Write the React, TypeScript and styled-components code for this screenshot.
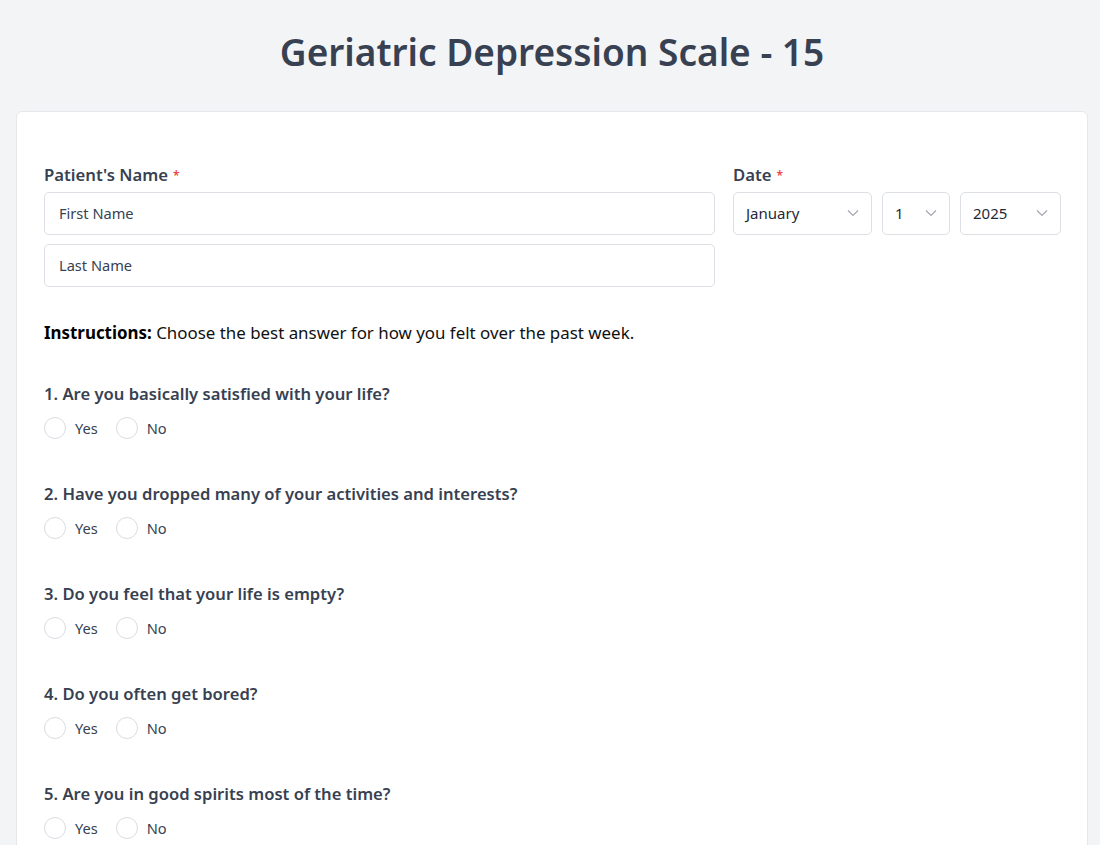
import React from "react";
import styled, { createGlobalStyle } from "styled-components";

const GlobalStyle = createGlobalStyle`
  html, body {
    margin: 0;
    padding: 0;
    background: #f3f4f6;
    font-family: "Noto Sans", "Open Sans", sans-serif;
    color: #374151;
  }
`;

const Page = styled.div`
  width: 1072px;
  padding: 0 16px;
`;

const Title = styled.h1`
  margin: 0;
  padding: 31px 0 38px;
  text-align: center;
  font-size: 37px;
  line-height: 42px;
  font-weight: 600;
  color: #374151;
`;

const Card = styled.div`
  background: #fff;
  border: 1px solid #e5e7eb;
  border-radius: 6px;
  padding: 51px 27px 40px;
  min-height: 800px;
`;

const TopRow = styled.div`
  display: grid;
  grid-template-columns: 671px 328px;
  column-gap: 18px;
`;

const Field = styled.div`
  display: flex;
  flex-direction: column;
  gap: 9px;
`;

const Label = styled.div`
  font-size: 16.7px;
  line-height: 24px;
  font-weight: 600;
  color: #374151;
  margin-bottom: -5px;
`;

const Req = styled.span`
  color: #ef4444;
  font-size: 12px;
  margin-left: 5px;
  vertical-align: 1px;
`;

const TextBox = styled.div`
  height: 41px;
  box-sizing: border-box;
  height: 43px;
  border: 1px solid #dcdfe4;
  border-radius: 5px;
  display: flex;
  align-items: center;
  padding: 0 14px 2px;
  font-size: 14.6px;
  color: #374151;
`;

const DateRow = styled.div`
  display: flex;
  gap: 10px;
`;

const Select = styled.div<{ $w: number }>`
  width: ${(p) => p.$w}px;
  box-sizing: border-box;
  height: 43px;
  border: 1px solid #dcdfe4;
  border-radius: 5px;
  display: flex;
  align-items: center;
  justify-content: space-between;
  padding: 0 12px 2px;
  font-size: 15px;
  color: #1f2937;
`;

const Chevron = () => (
  <svg width="12" height="8" viewBox="0 0 12 8" fill="none">
    <path d="M1 1.5l5 5 5-5" stroke="#a3a7ae" strokeWidth="1.2" />
  </svg>
);

const Instructions = styled.p`
  margin: 34px 0 0;
  font-size: 16.9px;
  line-height: 24px;
  color: #111;
  b {
    font-weight: 700;
    color: #000;
  }
`;

const Question = styled.div`
  margin-top: 37px;
  & + & {
    margin-top: 43px;
  }
`;

const QText = styled.div`
  font-size: 16.6px;
  line-height: 24px;
  font-weight: 600;
  color: #374151;
`;

const Options = styled.div`
  display: flex;
  align-items: center;
  gap: 18px;
  margin-top: 11px;
`;

const Option = styled.label`
  display: flex;
  align-items: center;
  gap: 9px;
  font-size: 14.6px;
  line-height: 22px;
  color: #374151;
`;

const Circle = styled.span`
  width: 20px;
  height: 20px;
  border: 1px solid #d9dce1;
  border-radius: 50%;
`;

const questions = [
  "Are you basically satisfied with your life?",
  "Have you dropped many of your activities and interests?",
  "Do you feel that your life is empty?",
  "Do you often get bored?",
  "Are you in good spirits most of the time?",
];

export default function App() {
  return (
    <>
      <GlobalStyle />
      <Page>
        <Title>Geriatric Depression Scale - 15</Title>
        <Card>
          <TopRow>
            <Field>
              <Label>
                Patient's Name<Req>*</Req>
              </Label>
              <TextBox>First Name</TextBox>
              <TextBox>Last Name</TextBox>
            </Field>
            <Field>
              <Label>
                Date<Req>*</Req>
              </Label>
              <DateRow>
                <Select $w={139}>
                  January <Chevron />
                </Select>
                <Select $w={68}>
                  1 <Chevron />
                </Select>
                <Select $w={101}>
                  2025 <Chevron />
                </Select>
              </DateRow>
            </Field>
          </TopRow>
          <Instructions>
            <b>Instructions:</b> Choose the best answer for how you felt over the past week.
          </Instructions>
          {questions.map((q, i) => (
            <Question key={i}>
              <QText>
                {i + 1}. {q}
              </QText>
              <Options>
                <Option>
                  <Circle />
                  Yes
                </Option>
                <Option>
                  <Circle />
                  No
                </Option>
              </Options>
            </Question>
          ))}
        </Card>
      </Page>
    </>
  );
}
